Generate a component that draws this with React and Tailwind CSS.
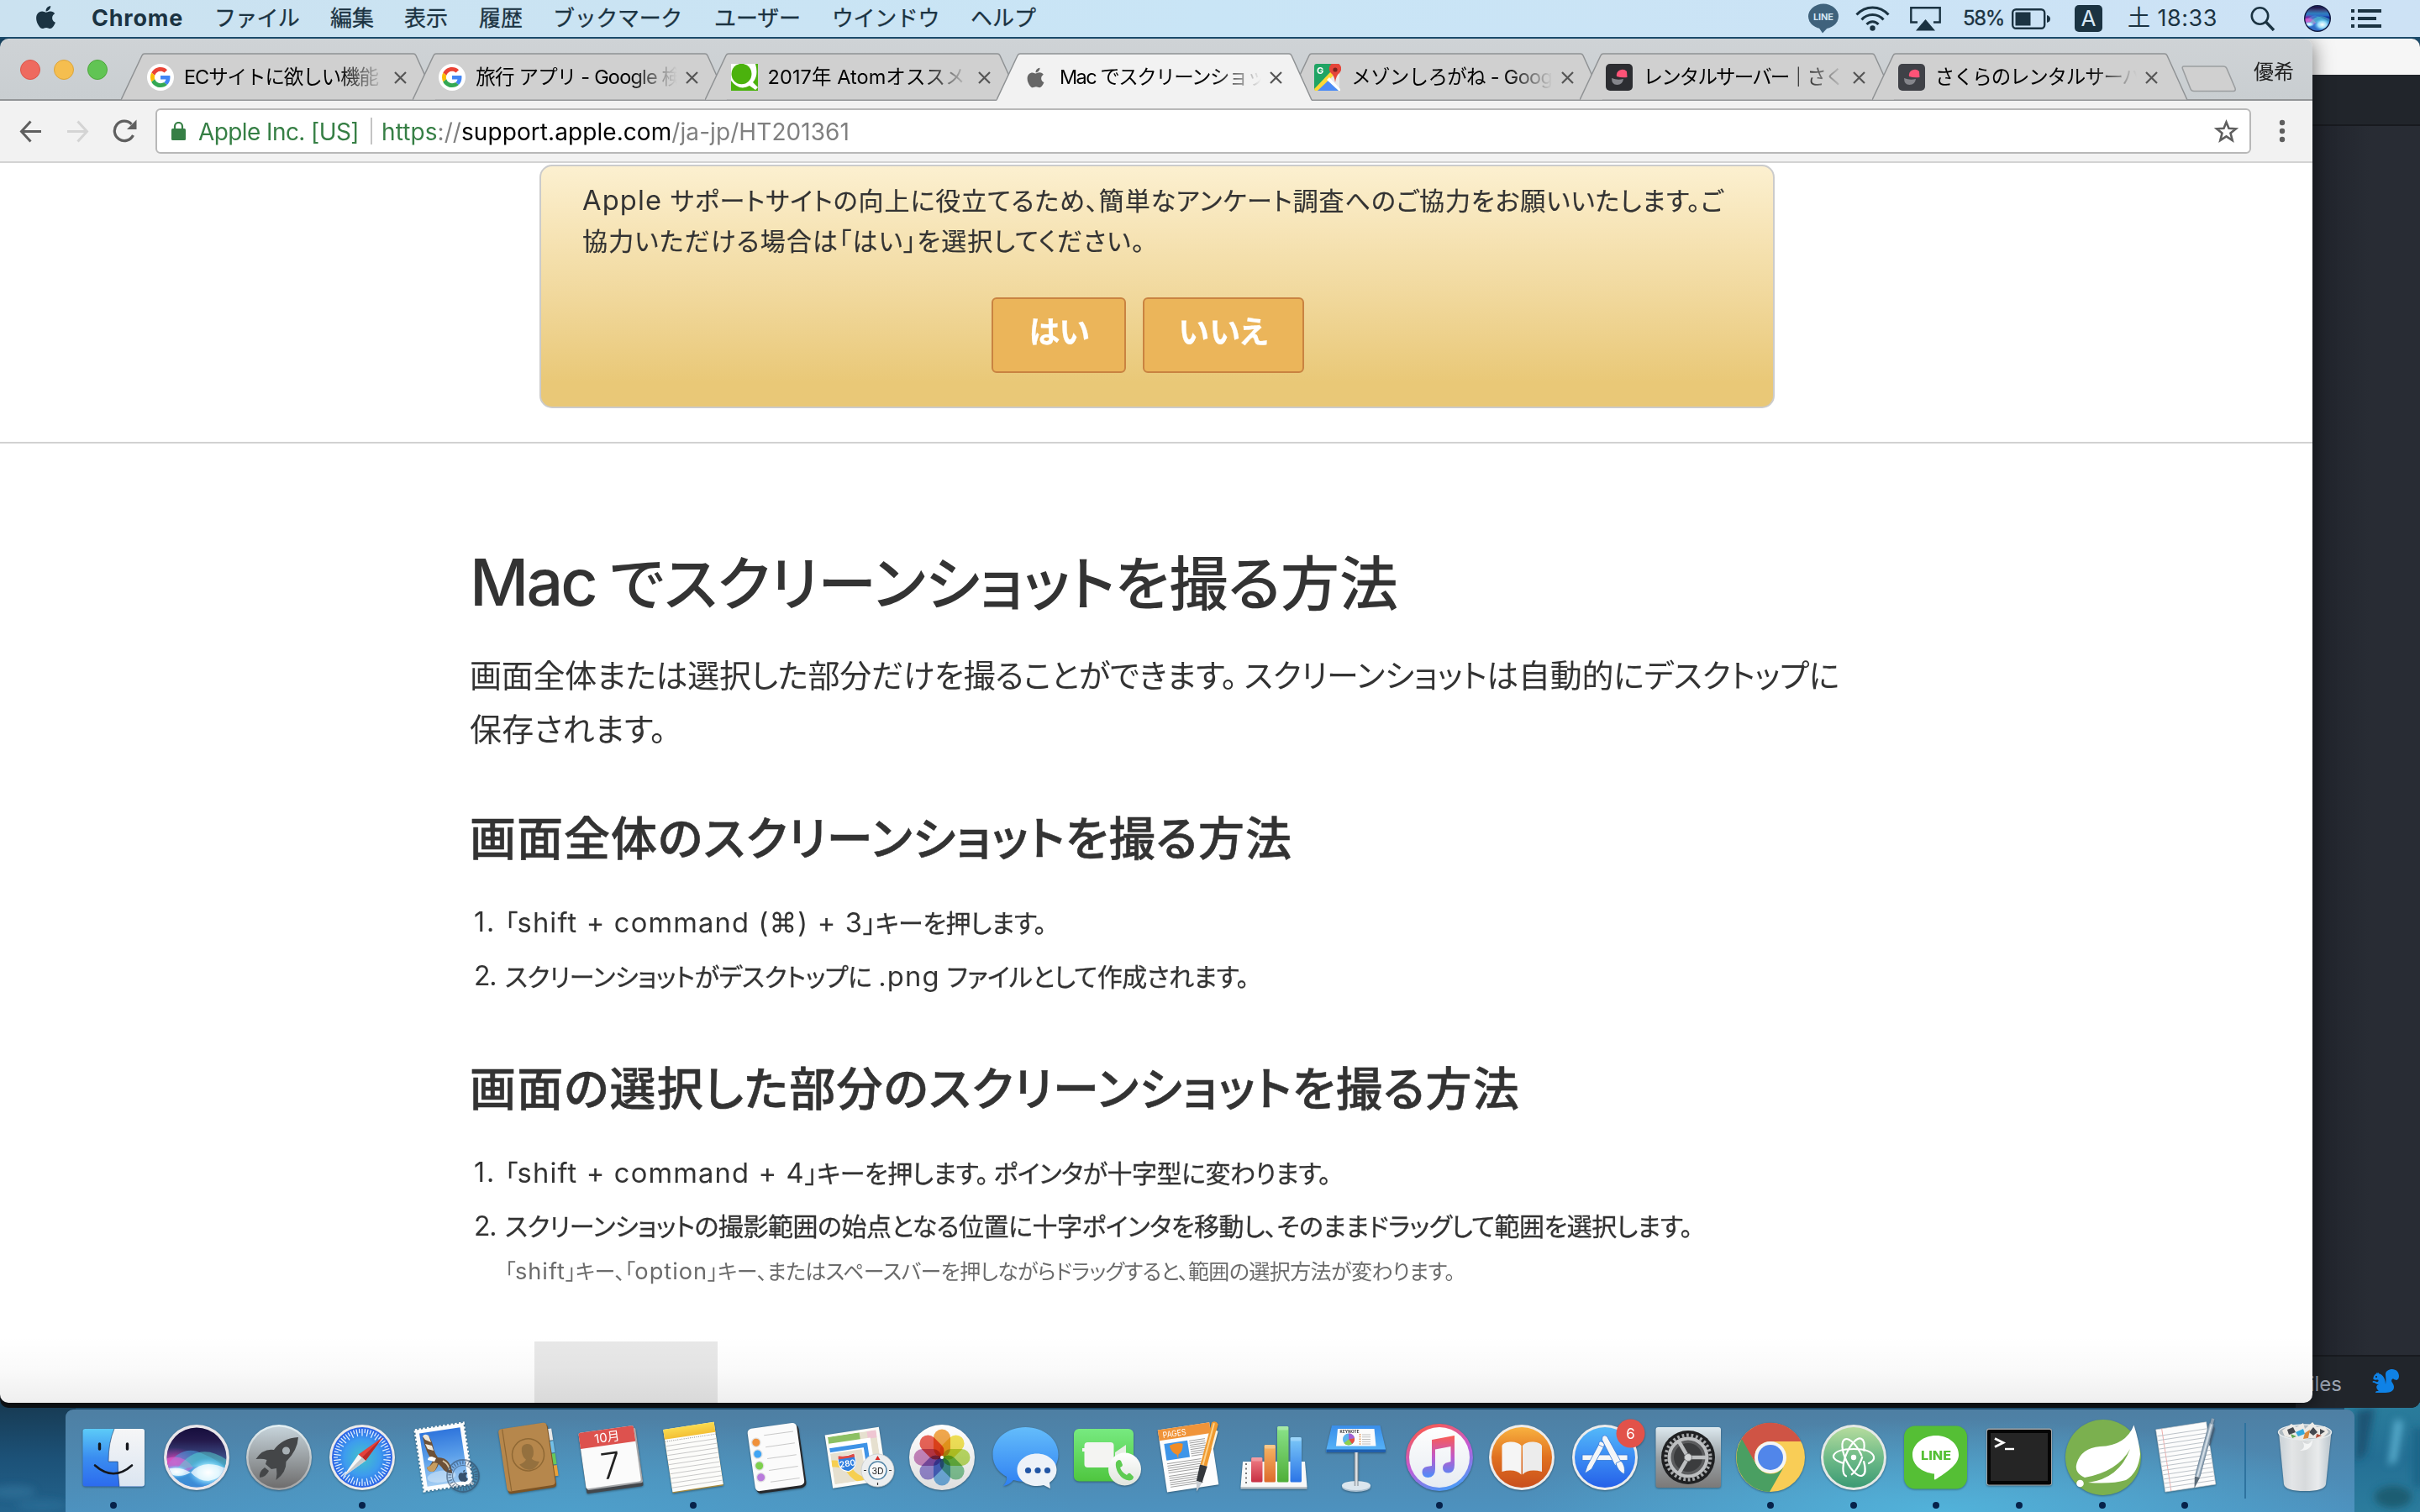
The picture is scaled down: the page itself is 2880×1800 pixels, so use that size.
import React, { useLayoutEffect, useRef } from 'react';
import { FaApple } from 'react-icons/fa';

/* Spaces the letters of one line of text so that it fills a given width. */
function Fit({ w, className = '', children }) {
  const ref = useRef(null);
  useLayoutEffect(() => {
    const el = ref.current;
    el.style.letterSpacing = '0px';
    const natural = el.getBoundingClientRect().width;
    const count = Math.max(1, el.textContent.length);
    el.style.letterSpacing = (w - natural) / count + 'px';
  }, [w]);
  return (
    <span ref={ref} className={'inline-block whitespace-pre ' + className}>
      {children}
    </span>
  );
}

/* Latin words inside Japanese text run slightly larger than the kana. */
function Latin({ children }) {
  return <span className="text-[1.09em] tracking-[0.035em] [-webkit-text-stroke:0px]">{children}</span>;
}

/* Extra room after a full stop in proportional Japanese setting. */
function Stop() {
  return <span className="mr-[0.22em]">。</span>;
}

/* ---------- menu bar ---------- */

const MENUS = [
  { t: 'ファイル', w: 101, box: 'w-[138px]' },
  { t: '編集', w: 52, box: 'w-[88px]' },
  { t: '表示', w: 52, box: 'w-[89px]' },
  { t: '履歴', w: 52, box: 'w-[88px]' },
  { t: 'ブックマーク', w: 154, box: 'w-[192px]' },
  { t: 'ユーザー', w: 103, box: 'w-[140px]' },
  { t: 'ウインドウ', w: 128, box: 'w-[165px]' },
  { t: 'ヘルプ', w: 78, box: 'w-[80px]' },
];

function MenuBar() {
  return (
    <div className="h-[44px] shrink-0 flex items-center bg-gradient-to-r from-[#cbe2f0] via-[#c9e5f6] to-[#cde2f5] text-[#1b3342] text-[26px] leading-[44px] relative z-10">
      <FaApple className="ml-[39px] mb-[4px] w-[31px] h-[31px]" />
      <div className="ml-[39px] w-[146px] font-bold"><Fit w={109} className="text-[27px]">Chrome</Fit></div>
      {MENUS.map((m) => (
        <div key={m.t} className={m.box + ' [-webkit-text-stroke:0.3px]'}><Fit w={m.w}>{m.t}</Fit></div>
      ))}
      <div className="flex-1" />
      <svg className="w-[36px] h-[36px]" viewBox="0 0 36 36">
        <ellipse cx="18" cy="15.5" rx="18" ry="15" fill="#3f627c" />
        <path d="M12 28 L17 35.5 L24 28 Z" fill="#3f627c" />
        <text x="18" y="20" fontSize="11" fontWeight="700" fill="#d3e6f4" textAnchor="middle" fontFamily="Inter" textLength="24">LINE</text>
      </svg>
      <svg className="ml-[20px] w-[41px] h-[30px]" viewBox="0 0 41 30" fill="none" stroke="#1b3342" strokeWidth="3">
        <path d="M1.5 10.5 C12 -1 29 -1 39.5 10.5" />
        <path d="M7.5 16.5 C14.5 8.5 26.5 8.5 33.5 16.5" />
        <path d="M13.5 22 C17.5 17.5 23.5 17.5 27.5 22" />
        <circle cx="20.5" cy="26.5" r="3.2" fill="#1b3342" stroke="none" />
      </svg>
      <svg className="ml-[24px] w-[37px] h-[29px]" viewBox="0 0 37 29">
        <path d="M9 18.5 H1.3 V1.2 H35.7 V18.5 H28" fill="none" stroke="#1b3342" strokeWidth="2.4" />
        <path d="M18.5 15 L30 28.5 H7 Z" fill="#1b3342" />
      </svg>
      <div className="ml-[26px] w-[58px] text-[24px] [-webkit-text-stroke:0.3px]"><Fit w={49}>58%</Fit></div>
      <svg className="w-[46px] h-[25px]" viewBox="0 0 46 25">
        <rect x="1.2" y="1.2" width="38" height="22.6" rx="4" fill="none" stroke="#1b3342" strokeWidth="2.4" />
        <rect x="4.5" y="4.5" width="18" height="16" fill="#1b3342" />
        <path d="M42 8 Q46 9 46 12.5 Q46 16 42 17 Z" fill="#1b3342" />
      </svg>
      <div className="ml-[29px] w-[33px] h-[32px] rounded-[5px] bg-[#1b3342] text-[#d6e7f5] text-[26px] leading-[32px] text-center">A</div>
      <div className="ml-[30px] w-[146px] text-[27px]"><Fit w={107}>土 18:33</Fit></div>
      <svg className="w-[30px] h-[30px]" viewBox="0 0 30 30" fill="none" stroke="#1b3342" strokeWidth="2.6">
        <circle cx="11.5" cy="12" r="9.7" />
        <path d="M18.5 19 L28 29" strokeWidth="3.4" />
      </svg>
      <div className="ml-[34px] w-[32px] h-[32px]"><SiriOrb small /></div>
      <svg className="ml-[24px] mr-[46px] w-[36px] h-[22px]" viewBox="0 0 36 22" fill="#1b3342">
        <path d="M0 0h4v4H0zM8 0h28v4H8zM0 9h4v4H0zM8 9h22v4H8zM0 18h4v4H0zM8 18h28v4H8z" />
      </svg>
    </div>
  );
}

/* ---------- browser window ---------- */

function GoogleMark() {
  return (
    <svg className="w-[32px] h-[32px]" viewBox="0 0 32 32">
      <circle cx="16" cy="16" r="16" fill="#fff" />
      <svg x="4" y="4" width="24" height="24" viewBox="0 0 48 48">
        <path fill="#EA4335" d="M24 9.5c3.54 0 6.71 1.22 9.21 3.6l6.85-6.85C35.9 2.38 30.47 0 24 0 14.62 0 6.51 5.38 2.56 13.22l7.98 6.19C12.43 13.72 17.74 9.5 24 9.5z" />
        <path fill="#4285F4" d="M46.98 24.55c0-1.57-.15-3.09-.38-4.55H24v9.02h12.94c-.58 2.96-2.26 5.48-4.78 7.18l7.73 6c4.51-4.18 7.09-10.36 7.09-17.65z" />
        <path fill="#FBBC05" d="M10.53 28.59c-.48-1.45-.76-2.99-.76-4.59s.27-3.14.76-4.59l-7.98-6.19C.92 16.46 0 20.12 0 24c0 3.88.92 7.54 2.56 10.78l7.97-6.19z" />
        <path fill="#34A853" d="M24 48c6.48 0 11.93-2.13 15.89-5.81l-7.73-6c-2.15 1.45-4.92 2.3-8.16 2.3-6.26 0-11.57-4.22-13.47-9.91l-7.98 6.19C6.51 42.62 14.62 48 24 48z" />
      </svg>
    </svg>
  );
}

function QiitaMark() {
  return (
    <svg className="w-[32px] h-[32px]" viewBox="0 0 32 32">
      <rect width="32" height="32" fill="#4bb20d" />
      <path d="M0 12 L0 0 H29 Q33 14 26 22 L32 28 L29 31 L22 26 Q10 33 0 20 Z" fill="#fff" />
      <ellipse cx="12.5" cy="12" rx="12" ry="12.2" fill="#4bb20d" />
    </svg>
  );
}

function MapsMark() {
  return (
    <svg className="w-[32px] h-[32px]" viewBox="0 0 32 32">
      <rect width="30" height="32" rx="3" fill="#20a464" />
      <path d="M30 8 V32 L15 17 Z" fill="#e9e9e9" />
      <path d="M2 32 L16 18 L29 32 Z" fill="#4c8bf5" />
      <path d="M0 30 L20 9 L24 13 L4 32 H1Z" fill="#fdd835" />
      <path d="M15 19 L18 16 L31 30 V32 H29Z" fill="#fff" />
      <text x="3" y="12" fontSize="11" fontWeight="700" fill="#fff" fontFamily="Inter">G</text>
      <path d="M25 22 Q24 14 20 11 A7.2 7.2 0 1 1 30 11 Q26 14 25 22Z" fill="#e5453a" />
      <circle cx="25" cy="7" r="2.6" fill="#7b231e" />
    </svg>
  );
}

function SakuraMark({ dark }) {
  return (
    <svg className="w-[32px] h-[32px]" viewBox="0 0 32 32">
      <rect width="32" height="32" rx="5" fill={dark ? '#2c2d31' : '#3f4147'} />
      <path d="M13 15 A7 7 0 0 1 25 9 L25.5 16 Q19 17 13 15Z" fill="#ff5377" />
      <path d="M7 17 Q14 20 21 18 Q20 25 13.5 25 Q7 25 7 17Z" fill="#85868c" />
    </svg>
  );
}

const TABS = [
  { icon: <GoogleMark />, text: 'ECサイトに欲しい機能', w: 231 },
  { icon: <GoogleMark />, text: '旅行 アプリ - Google 検', w: 244 },
  { icon: <QiitaMark />, text: '2017年 Atomオススメ', w: 235 },
  { icon: <FaApple className="w-[27px] h-[27px] mx-[2px] text-[#666]" />, text: 'Mac でスクリーンショッ', w: 245, active: true },
  { icon: <MapsMark />, text: 'メゾンしろがね - Goog', w: 239 },
  { icon: <SakuraMark dark />, text: 'レンタルサーバー｜さく', w: 238 },
  { icon: <SakuraMark />, text: 'さくらのレンタルサーバ', w: 245 },
];

function Tab({ tab }) {
  return (
    <div className={'relative h-[56px] w-[347.3px] shrink-0 ' + (tab.active ? 'z-[2]' : '')}>
      <svg className="absolute left-[-26px] top-0 w-[376px] h-[57px]" viewBox="0 0 376 57">
        <path
          d={tab.active ? 'M0 57 L25 3 Q26 1 28 1 H348 Q350 1 351 3 L375 57 Z' : 'M0 55.5 L25 3 Q26 1 28 1 H348 Q350 1 351 3 L375 55.5 Z'}
          fill={tab.active ? '#f2f2f2' : '#d0d0d0'}
        />
        <path d="M0 56 L25 3 Q26 1 28 1 H348 Q350 1 351 3 L375 56" fill="none" stroke="#8f9294" strokeWidth="1.5" />
      </svg>
      <div className="relative flex h-full items-center pl-[5px] pt-[2px]">
        <div className="w-[44px] shrink-0">{tab.icon}</div>
        <div className="w-[247px] overflow-hidden text-[23.5px] leading-[34px] text-black [mask-image:linear-gradient(to_right,black_184px,transparent_240px)]">
          <Fit w={tab.w}>{tab.text}</Fit>
        </div>
        <svg className="ml-[3px] w-[15px] h-[15px]" viewBox="0 0 15 15" stroke="#555" strokeWidth="2.2">
          <path d="M1 1 L14 14 M14 1 L1 14" />
        </svg>
      </div>
    </div>
  );
}

function TabStrip() {
  return (
    <div className="flex h-[74px] items-end border-b-2 border-[#939597] bg-gradient-to-b from-[#cfd3d6] to-[#c9ced1]">
      <div className="ml-[24px] mb-[23px] flex gap-[16px]">
        <i className="h-[24px] w-[24px] rounded-full border border-[#dc554a] bg-[#ee6a5f]" />
        <i className="h-[24px] w-[24px] rounded-full border border-[#dba43b] bg-[#f5be4f]" />
        <i className="h-[24px] w-[24px] rounded-full border border-[#4ea73d] bg-[#61c454]" />
      </div>
      <div className="ml-[42px] -mb-[1px] flex">
        {TABS.map((t) => <Tab key={t.text} tab={t} />)}
      </div>
      <svg className="mb-[8px] -ml-[5px] w-[66px] h-[32px]" viewBox="0 0 66 32">
        <path d="M3 1 H50 Q53 1 54 3.5 L64 27 Q65 30.5 62 30.5 H15 Q12 30.5 11 28 L1.5 4 Q0.5 1 3 1 Z" fill="#d0d0d0" stroke="#9b9ea0" strokeWidth="1.6" />
      </svg>
      <div className="ml-[20px] mb-[14px] text-[24px] leading-[36px] text-[#222]"><Fit w={48}>優希</Fit></div>
    </div>
  );
}

function Toolbar() {
  return (
    <div className="flex h-[74px] items-center border-b-2 border-[#d3d3d3] bg-[#f2f2f2]">
      <svg className="ml-[23px] w-[27px] h-[27px]" viewBox="0 0 27 27" fill="none" stroke="#5f5f5f" strokeWidth="3">
        <path d="M13.5 1.5 L2.5 13.5 L13.5 25.5 M2.5 13.5 H26" />
      </svg>
      <svg className="ml-[29px] w-[27px] h-[27px]" viewBox="0 0 27 27" fill="none" stroke="#d4d4d4" strokeWidth="3">
        <path d="M13.5 1.5 L24.5 13.5 L13.5 25.5 M24.5 13.5 H1" />
      </svg>
      <svg className="ml-[28px] w-[29px] h-[28px]" viewBox="0 0 29 28">
        <path d="M24.5 19 A11.7 11.7 0 1 1 22.5 5.8" fill="none" stroke="#5f5f5f" strokeWidth="3.2" />
        <path d="M28.5 0.5 V12 H17 Z" fill="#5f5f5f" />
      </svg>
      <div className="ml-[22px] flex h-[54px] w-[2494px] items-center rounded-[6px] border-2 border-[#b8b8b8] bg-white text-[28px] leading-[52px]">
        <svg className="ml-[17px] w-[17px] h-[22px]" viewBox="0 0 17 22">
          <rect y="8" width="17" height="14" rx="1.5" fill="#367f45" />
          <path d="M4 9 V5.5 A4.5 4.5 0 0 1 13 5.5 V9" fill="none" stroke="#367f45" strokeWidth="2.2" />
        </svg>
        <div className="ml-[15px] mt-[2px] w-[205px] text-[#367f45]"><Fit w={191}>Apple Inc. [US]</Fit></div>
        <div className="h-[32px] w-[2px] bg-[#c4c4c4]" />
        <Fit w={557} className="ml-[11px] mt-[2px] text-[#808080]"><span className="text-[#367f45]">https</span>://<span className="text-black">support.apple.com</span>/ja-jp/HT201361</Fit>
        <div className="flex-1" />
        <svg className="mr-[13px] w-[29px] h-[28px]" viewBox="0 0 29 28" fill="none" stroke="#5f5f5f" strokeWidth="2.6">
          <path d="M14.5 3.5 L17.5 10.8 L26 11.3 L19.5 16.6 L21.7 25 L14.5 20.4 L7.3 25 L9.5 16.6 L3 11.3 L11.5 10.8 Z" />
        </svg>
      </div>
      <svg className="ml-[33px] w-[8px] h-[28px]" viewBox="0 0 8 28" fill="#5f5f5f">
        <circle cx="4" cy="4" r="3.2" /><circle cx="4" cy="14" r="3.2" /><circle cx="4" cy="24" r="3.2" />
      </svg>
    </div>
  );
}

function Step({ n, w, children }) {
  return (
    <div className="flex h-[64px] items-center text-[30px] leading-[64px] [-webkit-text-stroke:0.3px]">
      <div className="w-[31px] text-right [-webkit-text-stroke:0px]"><Fit w={26} className="text-[32px]">{n + '.'}</Fit></div>
      <div className="ml-[11px]"><Fit w={w}>{children}</Fit></div>
    </div>
  );
}

function Page() {
  return (
    <div className="relative flex-1 overflow-hidden bg-white text-[#333] [font-feature-settings:'palt']">
      <div className="ml-[642px] mt-[2px] flex h-[290px] w-[1470px] flex-col rounded-[15px] border-2 border-[#cbcbcb] bg-gradient-to-b from-[#fcf0d0] to-[#e9c877] to-90% pl-[49px] pt-[17px] text-[30px] leading-[47.5px] [-webkit-text-stroke:0.2px]">
        <div><Fit w={1363}><Latin>Apple</Latin> サポートサイトの向上に役立てるため、簡単なアンケート調査へのご協力をお願いいたします。ご</Fit></div>
        <div><Fit w={670}>協力いただける場合は「はい」を選択してください。</Fit></div>
        <div className="ml-[487px] mt-[43px] flex gap-[20px] text-[37px] font-bold leading-[80px] text-white">
          <div className="h-[90px] w-[160px] rounded-[6px] border-2 border-[#c98341] bg-[#ebb55a] pl-[1px] text-center"><Fit w={72}>はい</Fit></div>
          <div className="h-[90px] w-[192px] rounded-[6px] border-2 border-[#c98341] bg-[#ebb55a] text-center"><Fit w={107}>いいえ</Fit></div>
        </div>
      </div>
      <div className="mt-[40px] h-[2px] bg-[#d2d2d2]" />
      <div className="ml-[559px]">
        <h1 className="mt-[115px] h-[100px] text-[70px] font-medium leading-[100px]">
          <Fit w={150} className="text-[77px]">Mac</Fit>
          <Fit w={938} className="ml-[17px]">でスクリーンショットを撮る方法</Fit>
        </h1>
        <div className="mt-[29px] text-[38px] leading-[64px]">
          <div><Fit w={1630}>画面全体または選択した部分だけを撮ることができます<Stop />スクリーンショットは自動的にデスクトップに</Fit></div>
          <div><Fit w={234}>保存されます。</Fit></div>
        </div>
        <h2 className="mt-[58px] text-[55px] font-medium leading-[80px] [-webkit-text-stroke:0.6px]"><Fit w={979}>画面全体のスクリーンショットを撮る方法</Fit></h2>
        <div className="mt-[28px]">
          <Step n="1" w={632}>「<Latin>shift + command (⌘) + 3</Latin>」キーを押します。</Step>
          <Step n="2" w={883}>スクリーンショットがデスクトップに <Latin>.png</Latin> ファイルとして作成されます。</Step>
        </div>
        <h2 className="mt-[62px] text-[55px] font-medium leading-[80px] [-webkit-text-stroke:0.6px]"><Fit w={1250}>画面の選択した部分のスクリーンショットを撮る方法</Fit></h2>
        <div className="mt-[28px]">
          <Step n="1" w={973}>「<Latin>shift + command + 4</Latin>」キーを押します<Stop />ポインタが十字型に変わります。</Step>
          <Step n="2" w={1413}>スクリーンショットの撮影範囲の始点となる位置に十字ポインタを移動し、そのままドラッグして範囲を選択します。</Step>
        </div>
        <div className="ml-[42px] text-[25px] leading-[44px] text-[#6b6b6b]"><Fit w={1124}>「<Latin>shift</Latin>」キー、「<Latin>option</Latin>」キー、またはスペースバーを押しながらドラッグすると、範囲の選択方法が変わります。</Fit></div>
        <div className="ml-[77px] mt-[61px] h-[90px] w-[218px] bg-[#e8e8e8]" />
      </div>
      <div className="absolute inset-x-0 bottom-0 h-[80px] bg-gradient-to-b from-black/0 via-black/[0.02] to-black/[0.065]" />
    </div>
  );
}

function Browser() {
  return (
    <div className="relative z-[1] flex h-[1624px] w-[2752px] shrink-0 flex-col overflow-hidden rounded-[10px] shadow-[0_4px_24px_rgba(0,0,0,0.55)]">
      <TabStrip />
      <Toolbar />
      <Page />
    </div>
  );
}

function EditorWindow() {
  return (
    <div className="-ml-[20px] flex h-[1630px] flex-1 flex-col overflow-hidden rounded-r-[10px] bg-[#282c34]">
      <div className="h-[43px] bg-[#f6f6f6]" />
      <div className="h-[59px] bg-[#21252b]" />
      <div className="h-[2px] bg-[#181a1f]" />
      <div className="flex-1 bg-gradient-to-r from-[#1e2129] to-[#282c34] to-60%" />
      <div className="h-[2px] bg-[#181a1f]" />
      <div className="flex h-[61px] items-center justify-end bg-[#21252b] pr-[25px] text-[#9da5b4]">
        <span className="mt-[5px] mr-[36px] text-[24px]">files</span>
        <svg className="mb-[3px] h-[32px] w-[32px]" viewBox="0 0 16 16" fill="#0f82e6">
          <path fillRule="evenodd" d="M12 1C9.79 1 8 2.31 8 3.92c0 1.94.5 3.03 0 6.08 0-4.5-2.77-6.34-4-6.34.05-.5-.48-.66-.48-.66s-.22.11-.3.34c-.27-.31-.56-.27-.56-.27l-.13.58S.7 4.29.68 6.87c.2.33 1.53.6 2.47.43.89.05.67.79.47.99C2.78 9.13 2 8 1 8S0 9 1 9s1 1 3 1c-3.09 1.2 0 4 0 4H3c-1 0-1 1-1 1h6c3 0 5-1 5-3.47 0-.85-.43-1.79-1-2.53-1.11-1.46.23-2.68 1-2 .77.68 3 1 3-2 0-2.21-1.79-4-4-4zM2.5 6c-.28 0-.5-.22-.5-.5s.22-.5.5-.5.5.22.5.5-.22.5-.5.5z" />
        </svg>
      </div>
    </div>
  );
}

/* ---------- dock icons, each on a 96 x 96 canvas ---------- */

function Svg({ children }) {
  return <svg className="h-full w-full overflow-visible" viewBox="0 0 96 96">{children}</svg>;
}

function Grad({ id, stops, h }) {
  return (
    <linearGradient id={id} x1="0" y1="0" x2={h ? 1 : 0} y2={h ? 0 : 1}>
      {stops.map((c, i) => <stop key={i} offset={i / (stops.length - 1)} stopColor={c} />)}
    </linearGradient>
  );
}

function SiriOrb({ small }) {
  const id = small ? 'siriS' : 'siriL';
  return (
    <svg className="h-full w-full" viewBox={small ? '9 9 78 78' : '0 0 96 96'}>
      <defs>
        <Grad id={id} stops={['#120a38', '#241a4c', '#3b4c86', '#2f7fc0', '#2a63c4']} />
        <clipPath id={id + 'c'}><circle cx="48" cy="48" r="35.5" /></clipPath>
        <radialGradient id={id + 'g'}><stop offset="0" stopColor="#fff" /><stop offset="0.5" stopColor="#a8ecff" stopOpacity="0.9" /><stop offset="1" stopColor="#4db4ff" stopOpacity="0" /></radialGradient>
        <radialGradient id={id + 'p'}><stop offset="0" stopColor="#ff3fae" /><stop offset="1" stopColor="#c22bb0" stopOpacity="0" /></radialGradient>
      </defs>
      <circle cx="48" cy="48" r="39" fill={small ? '#10183c' : '#e9e6ea'} />
      <g clipPath={`url(#${id}c)`}>
        <rect x="8" y="8" width="80" height="80" fill={small ? '#1430a0' : `url(#${id})`} />
        {small ? <rect x="8" y="8" width="80" height="34" fill={`url(#${id})`} /> : null}
        <ellipse cx="22" cy="54" rx="26" ry="18" fill={`url(#${id}p)`} />
        <path d="M10 62 Q30 30 56 44 Q76 52 88 66 V86 H10Z" fill="#4aa3e6" opacity="0.55" />
        <path d="M10 50 Q30 42 44 60 Q34 70 10 66Z" fill="#e45fd0" opacity="0.6" />
        <path d="M26 60 Q52 26 88 54 V62 Q60 52 26 64Z" fill="#58d9d2" opacity="0.5" />
        <ellipse cx="62" cy="66" rx="25" ry="18" fill={`url(#${id}g)`} />
        <ellipse cx="24" cy="65" rx="16" ry="8" fill={`url(#${id}g)`} />
        {small ? null : (
          <path d="M12 62 Q28 58 41 66 Q50 56 62 56 Q74 56 84 62 Q76 74 62 76 Q50 76 41 66 Q26 74 14 66Z" fill="#fff" opacity="0.7" />
        )}
      </g>
    </svg>
  );
}

function Finder() {
  return (
    <Svg>
      <defs><Grad id="fdL" stops={['#5ccbf8', '#3a8df0', '#2c6bee']} /><Grad id="fdR" stops={['#f6f6f7', '#dbe5f1']} /></defs>
      <rect x="11.5" y="14" width="73.5" height="68.5" rx="3" fill="url(#fdL)" />
      <path d="M49 14 H82 Q85 14 85 17 V79.5 Q85 82.5 82 82.5 H55 Q53.5 68 53.5 53 H42 Q42 30 49 14Z" fill="url(#fdR)" />
      <path d="M49 14 Q42 30 42 53 H53 Q53 68 55 82.5" fill="none" stroke="#1e3b66" strokeWidth="1" opacity="0.6" />
      <path d="M31.5 32 V38 M64.5 32 V38" stroke="#15171c" strokeWidth="3.4" strokeLinecap="round" />
      <path d="M26 57.5 Q48 77 70 57.5" fill="none" stroke="#15171c" strokeWidth="2.6" strokeLinecap="round" />
    </Svg>
  );
}

function Launchpad() {
  return (
    <Svg>
      <defs><Grad id="lpA" stops={['#e4f1f5', '#a2a2a3']} /><Grad id="lpB" stops={['#c6d3da', '#6e6d6d']} /></defs>
      <circle cx="48" cy="48" r="39" fill="url(#lpA)" /><circle cx="48" cy="48" r="36.5" fill="url(#lpB)" />
      <path d="M71 24 Q52 25 42 39 Q29 37 20.5 50 Q29 49 33.5 51 L32 56 L39 62 L45 61 Q46 67 44.5 75 Q57 66 56.5 53 Q70 40 71 24Z" fill="#444648" />
      <path d="M31 60 Q24 65 25 72 Q33 71 36 64Z" fill="#444648" />
      <circle cx="56.5" cy="40" r="4.6" fill="#a9b1b5" />
    </Svg>
  );
}

function Safari() {
  const ticks = Array.from({ length: 60 }, (_, i) => i);
  return (
    <Svg>
      <defs><radialGradient id="sfA"><stop offset="0" stopColor="#43c2c9" /><stop offset="0.6" stopColor="#3d9bef" /><stop offset="1" stopColor="#2b62e6" /></radialGradient></defs>
      <circle cx="48" cy="48" r="39" fill="#eceaea" /><circle cx="48" cy="48" r="36" fill="url(#sfA)" />
      {ticks.map((i) => (
        <path key={i} d={i % 2 ? 'M48 14 V19' : 'M48 14 V22.5'} stroke="#e6f3ff" strokeWidth="1.2" transform={`rotate(${i * 6} 48 48)`} />
      ))}
      <path d="M72.5 24 L43.5 44.5 L52 52Z" fill="#e5413b" />
      <path d="M72.5 24 L48 48 L52 52Z" fill="#b92c29" />
      <path d="M25 71.5 L43.5 44.5 L52 52Z" fill="#f6f6f6" />
      <path d="M25 71.5 L48 48 L52 52Z" fill="#c7c9cb" />
    </Svg>
  );
}

function Mail() {
  return (
    <Svg>
      <defs><Grad id="mlA" stops={['#2f75dc', '#5b9fe9', '#a3cdf3']} /></defs>
      <g transform="rotate(-8.6 46 47)">
        <rect x="17" y="11" width="58" height="73" fill="#fdfdfd" stroke="#fdfdfd" strokeWidth="3" strokeDasharray="2.4 2.4" />
        <rect x="21.5" y="15.5" width="49" height="64" fill="url(#mlA)" />
        <ellipse cx="40" cy="70" rx="17" ry="7" fill="#dcebf9" opacity="0.5" />
      </g>
      <path d="M21 23 Q24 20 28 22 Q33 30 34 38 Q36 44 39 48 Q48 48 52 54 Q56 60 56 67 Q48 67 43 59 L40 56 Q36 66 32 65 Q27 65 26 60 Q30 59 33 52 Q25 44 21 23Z" fill="#6d5138" />
      <path d="M21 23 Q23 19 28 22 L31 30 L24 27Z M24 32 L32 34 L34 40 L27 38Z" fill="#eee6d8" />
      <path d="M39 55 Q36 66 32 65 Q27 65 26 60 Q31 58 34 54Z" fill="#c79d60" />
      <path d="M32 47 Q27 47 27 51 L35 53 L37 49Z" fill="#fff" />
      <path d="M45 52 Q52 56 53 63" fill="none" stroke="#d9c7a6" strokeWidth="2" />
      <g fill="none" stroke="#37506c" opacity="0.6"><circle cx="69" cy="70" r="19" strokeWidth="1.8" /><circle cx="69" cy="70" r="12.5" strokeWidth="1.2" /><circle cx="69" cy="70" r="15.7" strokeWidth="4" strokeDasharray="1.5 1.8" /></g>
      <svg x="62" y="62.5" width="14" height="15" viewBox="0 0 24 28" fill="#37506c"><path d="M12 8 C16 5 20 6 22 9 C17 12 18 18 23 20 C21 25 18 29 12 26 C6 29 1 20 2 14 C3 7 8 6 12 8 Z M12 6 Q12 1 17 0 Q17 5 12 6Z" /></svg>
    </Svg>
  );
}

function Contacts() {
  return (
    <Svg>
      <g transform="rotate(-8.6 48 48)">
        <path d="M74 18h7v14h-7z" fill="#e6e6e6" /><path d="M74 33h7v14h-7z" fill="#72bfe8" /><path d="M74 48h7v13h-7z" fill="#66c85c" /><path d="M74 62h7v13h-7z" fill="#e8a13a" />
        <rect x="19" y="12" width="58" height="76" rx="4" fill="#7c5425" />
        <rect x="18" y="10" width="58" height="75" rx="4" fill="#b6874c" />
        <path d="M23 10.5 V84.5" stroke="#8f6733" strokeWidth="1.2" />
        <circle cx="49" cy="45" r="19" fill="none" stroke="#8f6834" strokeWidth="1.5" />
        <path d="M49 32 Q56 32 56 40 Q56 47 52.5 50 Q53 53 61 55 Q56 63 49 63 Q42 63 37 55 Q45 53 45.5 50 Q42 47 42 40 Q42 32 49 32Z" fill="#94703e" />
      </g>
    </Svg>
  );
}

function Calendar() {
  return (
    <Svg>
      <g transform="rotate(-8 48 50)">
        <rect x="14" y="19" width="68" height="68" rx="2" fill="#43474c" />
        <rect x="15" y="17" width="67" height="66" rx="2" fill="#a6a8ab" />
        <rect x="14" y="14" width="66" height="67" rx="2" fill="#fbfbfb" />
        <path d="M14 16 Q14 14 16 14 H78 Q80 14 80 16 V33 H14Z" fill="#dd524e" />
        <text x="47" y="29" fontSize="15" fill="#fff" textAnchor="middle" fontFamily="Inter, 'Noto Sans CJK JP'">10月</text>
        <text x="47" y="73" fontSize="43" fontWeight="300" fill="#222" textAnchor="middle" fontFamily="Inter">7</text>
      </g>
    </Svg>
  );
}

function Lines({ from, to, n, x1, x2, color }) {
  return Array.from({ length: n }, (_, i) => {
    const y = from + ((to - from) * i) / (n - 1);
    return <path key={i} d={`M${x1} ${y} H${x2}`} stroke={color} strokeWidth="0.9" />;
  });
}

function Notes() {
  return (
    <Svg>
      <defs><Grad id="ntA" stops={['#fbdb4f', '#f3bf34']} /></defs>
      <g transform="rotate(-8.6 48 47.5)">
        <rect x="17.5" y="11" width="61" height="75.5" fill="#a58a3f" />
        <rect x="17.5" y="10" width="61" height="75" fill="#fcfcfa" />
        <rect x="17.5" y="10" width="61" height="12" fill="url(#ntA)" />
        <path d="M17.5 24.5 H78.5" stroke="#8b8b8b" strokeDasharray="1 1.5" />
        <Lines from={30} to={80} n={10} x1={18} x2={78} color="#c6c6c6" />
      </g>
    </Svg>
  );
}

function Reminders() {
  const dots = ['#f0913a', '#41a5f4', '#7ed04e', '#b97bdc'];
  return (
    <Svg>
      <g transform="rotate(-8 48 48)">
        <rect x="19" y="12" width="60" height="76" rx="6" fill="#26282b" />
        <rect x="18" y="10" width="59" height="75" rx="5" fill="#fbfbfb" />
        <path d="M37 20 H72" stroke="#c9c9c9" />
        {dots.map((c, i) => (
          <g key={c}>
            <circle cx="26.5" cy={27 + i * 14} r="5.8" fill="#e0e0e0" />
            <circle cx="26.5" cy={27 + i * 14} r="4.5" fill={c} />
            <path d={`M37 ${34 + i * 14} H72`} stroke="#c9c9c9" />
          </g>
        ))}
      </g>
    </Svg>
  );
}

function Maps() {
  return (
    <Svg>
      <defs><clipPath id="mpC"><rect x="14" y="19" width="58" height="57" /></clipPath></defs>
      <g transform="rotate(-8.6 45 48)">
        <rect x="11" y="16" width="65" height="64" fill="#fbfbf8" />
        <g clipPath="url(#mpC)">
          <rect x="14" y="19" width="58" height="57" fill="#e6e0cf" />
          <path d="M14 19h38v9H14z" fill="#8cc063" /><path d="M61 19h11v9H61z" fill="#efc6d2" />
          <path d="M14 33 H58 V76" fill="none" stroke="#fff" strokeWidth="12" />
          <path d="M14 35 H57 V76" fill="none" stroke="#3f93e6" strokeWidth="5" />
          <path d="M14 51 Q30 52 34 62 Q38 72 52 78" fill="none" stroke="#f6cf52" strokeWidth="8" />
        </g>
        <path d="M23 43 Q32 46 42 43 Q46 60 32.5 63 Q19 60 23 43Z" fill="#2f7fe0" stroke="#fff" />
        <path d="M23 43 Q32 46 42 43 L42.5 47 H22.5Z" fill="#dc4b45" />
        <text x="32.5" y="57" fontSize="10" fontWeight="600" fill="#fff" textAnchor="middle" fontFamily="Inter">280</text>
      </g>
      <circle cx="69.5" cy="63.5" r="19.5" fill="#eceeef" stroke="#c6cacc" strokeWidth="0.8" />
      <circle cx="69.5" cy="63.5" r="10.5" fill="#f6f8f9" stroke="#5486a8" strokeWidth="1.5" />
      <text x="69.5" y="67.5" fontSize="10.5" fill="#222" textAnchor="middle" fontFamily="Inter">3D</text>
      <path d="M69.5 46 L72.5 51 H66.5Z" fill="#dc2b27" />
      <path d="M69.5 78 V81 M53 63.5 H56 M83 63.5 H86" stroke="#333" strokeWidth="1.2" />
    </Svg>
  );
}

function Photos() {
  const c = ['#f39a2e', '#f2e03a', '#b3d84a', '#6fc187', '#5ca6e2', '#8a79cf', '#c274b8', '#ea4a3c'];
  return (
    <Svg>
      <defs><Grad id="phA" stops={['#fefefe', '#dedede']} /></defs>
      <circle cx="48" cy="48" r="39" fill="url(#phA)" />
      {c.map((f, i) => (
        <rect key={f} x="38" y="14.5" width="20" height="33" rx="10" fill={f} opacity="0.85" className="mix-blend-multiply" transform={`rotate(${i * 45} 48 48)`} />
      ))}
      <circle cx="48" cy="48" r="2" fill="#fff" />
    </Svg>
  );
}

function Messages() {
  return (
    <Svg>
      <defs><Grad id="msA" stops={['#64bdfb', '#2f80f2']} /></defs>
      <path d="M48.5 12 C70 12 87.5 26 87.5 44.5 C87.5 63 70 77 48.5 77 Q40 77 34 75 Q29 81 22 82 Q27 76 26 71 Q9.5 62 9.5 44.5 C9.5 26 27 12 48.5 12Z" fill="url(#msA)" />
      <path d="M62 43.5 C75 43.5 85.5 52 85.5 63 Q85.5 72 77 78 L78 85 L70 81 Q66 82 62 82 C49 82 38.5 74 38.5 63 C38.5 52 49 43.5 62 43.5Z" fill="#edf2f8" />
      <circle cx="51.5" cy="63.5" r="3.6" fill="#2256a5" /><circle cx="63" cy="63.5" r="3.6" fill="#2256a5" /><circle cx="74.5" cy="63.5" r="3.6" fill="#2256a5" />
    </Svg>
  );
}

function FaceTime() {
  return (
    <Svg>
      <defs><Grad id="ftA" stops={['#77ea80', '#4fc63f']} /><Grad id="ftB" stops={['#fff', '#dfe4dd']} /></defs>
      <rect x="8" y="14" width="71" height="62.5" rx="6" fill="url(#ftA)" />
      <rect x="20.5" y="30" width="35" height="30" rx="4" fill="#f4f4f2" /><rect x="18" y="37" width="3" height="4" fill="#f4f4f2" />
      <path d="M57 42 L70 33 V56 L57 48Z" fill="#e7efe5" />
      <circle cx="68.5" cy="62" r="19.5" fill="url(#ftB)" />
      <path d="M58 54 Q61 49 64 52 L66 57 Q66 59 63 60 Q65 66 71 69 Q73 66 75 67 L79 71 Q79 75 74 75.5 Q66 75 61 67 Q57 60 58 54Z" fill="#5ecb52" />
    </Svg>
  );
}

function Pages() {
  return (
    <Svg>
      <g transform="rotate(-8.6 44 47.5)">
        <rect x="14" y="10.5" width="62" height="75" fill="#fdfdfd" />
        <rect x="14" y="10.5" width="62" height="13" fill="#f0943a" />
        <text x="19" y="21" fontSize="10" fill="#fff" fontFamily="Inter" textLength="28" lengthAdjust="spacingAndGlyphs">PAGES</text>
        <rect x="19" y="28" width="28" height="20" fill="#3e95e8" />
        <path d="M25 31 Q33 28 41 31 Q40 40 34 43 L33 48 L32 43 Q26 40 25 31Z" fill="#f08c24" />
        <Lines from={29} to={47} n={8} x1={49} x2={68} color="#9a9a9a" />
        <Lines from={52} to={63} n={5} x1={19} x2={60} color="#9a9a9a" />
        <Lines from={67} to={80} n={6} x1={19} x2={58} color="#9a9a9a" />
      </g>
      <g transform="rotate(15 66 48)">
        <path d="M62 6 Q66 2 70 6 V58 H62Z" fill="#f09a2f" /><path d="M64 6 h2 V58 h-2z" fill="#fbd28c" />
        <path d="M69.5 14 h2.5 V36 h-2.5z" fill="#fff3dc" />
        <path d="M61.5 58 H70.5 L69.5 78 H62.5Z" fill="#33373b" />
        <path d="M62.5 78 H69.5 L66 90Z" fill="#c9cdd2" />
      </g>
    </Svg>
  );
}

function Numbers() {
  const bars = [[21, 48, '#f07f86', '#c82f43'], [36.5, 33, '#f6b765', '#dd6a2b'], [52, 11, '#8be38b', '#4fae38'], [67.5, 24, '#7cc9f8', '#2b74e6']];
  return (
    <Svg>
      <defs>{bars.map((b, i) => <Grad key={i} id={'nb' + i} stops={[b[2], b[3]]} />)}</defs>
      <path d="M11 53 H85 L87.5 83 H8.5Z" fill="#f8f8f8" /><path d="M8.5 83 H87.5 V85.5 H8.5Z" fill="#bfc3c7" />
      <path d="M15 55 V80" stroke="#777" strokeWidth="2" strokeDasharray="2 3.5" />
      {bars.map((b, i) => (
        <g key={i}><rect x={b[0]} y={b[1]} width="13.5" height={77.5 - b[1]} rx="1.5" fill={`url(#nb${i})`} /><rect x={b[0] + 0.5} y={b[1]} width="12.5" height="4.5" rx="1" fill="#fff" opacity="0.25" /></g>
      ))}
    </Svg>
  );
}

function Keynote() {
  return (
    <Svg>
      <defs><Grad id="knA" stops={['#3a8eea', '#58b5f8']} /><Grad id="knB" h stops={['#77828c', '#f0f3f5', '#7c8790']} /></defs>
      <ellipse cx="48" cy="83" rx="17" ry="6" fill="#a9bfd0" /><ellipse cx="48" cy="81.5" rx="17" ry="5.5" fill="#dbe6ee" />
      <rect x="45.8" y="40" width="4.7" height="42" fill="url(#knB)" />
      <path d="M19 10 H76.5 L83 38 V42 H12.5 V38Z" fill="url(#knA)" /><path d="M12.5 38.5 H83 V42 H12.5Z" fill="#1f5fb0" />
      <path d="M26 14 H69.5 L71.5 34.5 H24Z" fill="#fbfbfb" />
      <text x="28.5" y="18.5" fontSize="4.6" fontWeight="700" fill="#333" fontFamily="Inter" textLength="23">KEYNOTE</text>
      <circle cx="39" cy="26.5" r="7" fill="#5db4ee" />
      <path d="M39 26.5 V19.5 A7 7 0 0 1 46 25Z" fill="#a55fd0" /><path d="M39 26.5 L46 25 A7 7 0 0 1 43 32Z" fill="#e5503d" /><path d="M39 26.5 L43 32 A7 7 0 0 1 33.5 31Z" fill="#8fd04c" />
      <Lines from={21} to={32} n={5} x1={55} x2={65} color="#b9b9b9" />
      <path d="M52.5 20 V33" stroke="#e08a3e" strokeWidth="1.5" strokeDasharray="1.5 1.3" />
    </Svg>
  );
}

function ITunes() {
  return (
    <Svg>
      <defs>
        <linearGradient id="itA" x1="0.3" y1="0" x2="0.7" y2="1"><stop offset="0" stopColor="#fb5a4d" /><stop offset="0.5" stopColor="#c25ad8" /><stop offset="1" stopColor="#3fa0fa" /></linearGradient>
        <Grad id="itB" stops={['#fefefe', '#e7ecf2']} />
        <Grad id="itC" stops={['#fb5c50', '#c159c9', '#4a8dfb']} />
      </defs>
      <circle cx="48" cy="48" r="40" fill="url(#itA)" /><circle cx="48" cy="48" r="36" fill="url(#itB)" />
      <path d="M39 27 L66 22 V57 Q66 66 59 66.5 Q52 66.5 52 60.5 Q52 55 58 54 L61.5 53 V35 L43 38.5 V62 Q43 71.5 34.5 72 Q27.5 71.5 27.5 65.5 Q27.5 60 33 59 L39 58Z" fill="url(#itC)" />
    </Svg>
  );
}

function IBooks() {
  return (
    <Svg>
      <defs><Grad id="ibA" stops={['#f8b13f', '#e0701f', '#c94f1d']} /></defs>
      <circle cx="48" cy="48" r="39" fill="#ececec" /><circle cx="48" cy="48" r="36" fill="url(#ibA)" />
      <path d="M47.5 34 Q43 29 34 29.5 Q26 30 24.5 34 V65 Q40 61 47.5 68.5Z" fill="#f5f5f5" />
      <path d="M49 34 Q53 29 62 29.5 Q70 30 72 34 V65 Q56 61 49 68.5Z" fill="#ececec" />
    </Svg>
  );
}

function AppStore() {
  return (
    <Svg>
      <defs><Grad id="asA" stops={['#54b9f9', '#3b8cf4', '#2560e8']} /></defs>
      <circle cx="48" cy="48" r="39" fill="#ececec" /><circle cx="48" cy="48" r="36" fill="url(#asA)" />
      <g fill="#f4f6f8" stroke="#3578d8" strokeWidth="0.8">
        <rect x="21" y="45" width="54" height="6.5" />
        <path d="M42 30 L47.5 34 L32 62 L24 67 L27 58Z" /><path d="M41 30 Q43 27 47.5 32 L46.5 36 L40.5 33Z" />
        <path d="M45 23 Q48 20.5 50.5 23 L67 53 L60 57.5 L44.5 27Z" /><path d="M61 55 L67 52 Q73 58 71 68 Q63 64 61 55Z" />
      </g>
      <circle cx="78.5" cy="19.5" r="17" fill="#e2524a" />
      <text x="78.5" y="25.5" fontSize="17" fill="#fff" textAnchor="middle" fontFamily="Inter">6</text>
    </Svg>
  );
}

function Settings() {
  return (
    <Svg>
      <defs><Grad id="stA" stops={['#dde9ef', '#9aa1a5', '#7b7978']} /></defs>
      <rect x="9.5" y="12" width="77.5" height="72" rx="3" fill="url(#stA)" />
      <circle cx="48" cy="48" r="32" fill="#1f2022" />
      <circle cx="48" cy="48" r="26.5" fill="none" stroke="#a7a9ab" strokeWidth="4" strokeDasharray="2.75 2.8" />
      <circle cx="48" cy="48" r="22.5" fill="#5b5c5e" stroke="#bdbfc1" strokeWidth="4" />
      <circle cx="48" cy="48" r="17" fill="#3b3c3e" />
      <path d="M48 48 H69 M48 48 L37.5 29.8 M48 48 L37.5 66.2" stroke="#bcbec0" strokeWidth="4.5" />
      <circle cx="48" cy="48" r="4.5" fill="#d3d5d6" stroke="#77797b" />
    </Svg>
  );
}

function Chrome() {
  return (
    <Svg>
      <circle cx="48" cy="48" r="41" fill="#f9cd56" />
      <path d="M12.5 27.5 A41 41 0 0 1 84.5 29 H48 A19 19 0 0 0 30 41 L30 54Z" fill="#cf5445" />
      <path d="M14 26 A41 41 0 0 0 47 89 L63.5 60 A19 19 0 0 1 31.5 57.5Z" fill="#4a9f62" />
      <circle cx="48" cy="48" r="19" fill="#f5f5f5" /><circle cx="48" cy="48" r="15" fill="#5186ea" />
    </Svg>
  );
}

function Atom() {
  return (
    <Svg>
      <defs><Grad id="atA" stops={['#b6dc9d', '#6fbb88', '#3b9a74']} /></defs>
      <circle cx="48" cy="48" r="39" fill="#e5e9e6" /><circle cx="48" cy="48" r="36" fill="url(#atA)" />
      <g fill="none" stroke="#fff" strokeWidth="2.2" strokeLinecap="round">
        <path d="M66 55 Q73 52 72 47 Q69 38 48 38 Q27 38 24 46 Q23 51 36 55" />
        <ellipse cx="48" cy="48" rx="24" ry="9.5" transform="rotate(64 48 48)" strokeDasharray="84 8" />
        <ellipse cx="48" cy="48" rx="24" ry="9.5" transform="rotate(112 48 48)" strokeDasharray="70 8 24" />
      </g>
      <circle cx="48" cy="48" r="3.2" fill="#fff" />
    </Svg>
  );
}

function Line() {
  return (
    <Svg>
      <rect x="10" y="10.5" width="75" height="75" rx="13" fill="#55bf35" />
      <path d="M48 22 C63 22 75 32 75 45 C75 57 60 66 47 74.5 Q45.5 75 46 71 L46 67.5 C31 66 20 57 20 45 C20 32 33 22 48 22Z" fill="#fff" />
      <text x="48" y="51" fontSize="15" fontWeight="800" fill="#55bf35" textAnchor="middle" fontFamily="Inter" textLength="36" lengthAdjust="spacingAndGlyphs">LINE</text>
    </Svg>
  );
}

function Terminal() {
  return (
    <Svg>
      <rect x="9" y="13.5" width="78" height="68" rx="3" fill="#a4a7a9" />
      <rect x="10" y="15" width="76" height="65.5" rx="2" fill="#050505" /><rect x="14" y="19" width="68" height="57" fill="#252525" />
      <path d="M19 25.5 L29 30.5 L19 35.5" fill="none" stroke="#fff" strokeWidth="2.8" /><path d="M31 38 H42" stroke="#fff" strokeWidth="2.4" />
    </Svg>
  );
}

function Spring() {
  return (
    <Svg>
      <circle cx="49" cy="48" r="45" fill="#7bb04f" />
      <path d="M85.5 9.5 Q92 30 93 44 Q91 66 76 75 Q60 80 31 78 Q68 73 81 38 Q66 65 27 72 Q14 66 17.5 55 Q23 37 45 35 Q76 34 85.5 9.5Z" fill="#fff" />
      <circle cx="21.5" cy="79" r="4.3" fill="#fff" />
    </Svg>
  );
}

function TextEdit() {
  return (
    <Svg>
      <defs><Grad id="teA" h stops={['#5d7890', '#dfe8ef', '#5c768d']} /></defs>
      <g transform="rotate(-8.6 49 47.5)">
        <rect x="19" y="10" width="60.5" height="75" fill="#fcfcfc" stroke="#d6d6d6" strokeWidth="0.6" />
        <path d="M26 10 V85" stroke="#f0b0ae" />
        <Lines from={18} to={80} n={13} x1={19.5} x2={79} color="#b9bfc6" />
      </g>
      <g transform="rotate(15 69 48)">
        <rect x="66" y="6" width="6.5" height="66" rx="2" fill="url(#teA)" /><path d="M66 72 H72.5 L69.3 86Z" fill="#5c6c79" />
        <path d="M73.5 10 V32" stroke="#4a6076" strokeWidth="1.5" /><rect x="67.5" y="0" width="3.5" height="7" fill="#8ba0b2" />
      </g>
    </Svg>
  );
}

function Trash() {
  return (
    <Svg>
      <defs><Grad id="trA" h stops={['#cfd6db', '#ececec', '#dfe0e0', '#f2f2f2', '#bfc9d0']} /></defs>
      <path d="M17 18 L23 80 Q25 88 48 88 Q71 88 73 80 L79.5 18Z" fill="url(#trA)" opacity="0.95" />
      <ellipse cx="48" cy="18" rx="31.5" ry="9" fill="#aeb9c0" stroke="#e6ecef" strokeWidth="1.5" />
      <path d="M21 16 L32 8 L38 12 L46 7 L48 14 L57 6 L62 12 L72 11 L76 18 L68 26 L54 25 L44 28 L32 25 L24 23Z" fill="#eceae6" />
      <path d="M27 15 L34 12 L37 18 L29 21Z M58 12 L63 18 L58 22 L53 18Z M66 14 L72 17 L66 21Z" fill="#45494f" />
      <path d="M37 18 L46 14 L48 20 L40 23Z" fill="#35a9dc" /><path d="M48 19 L54 15 L52 25 L46 26Z" fill="#d98a3f" /><path d="M31 20 L38 23 L33 25Z" fill="#62a852" /><path d="M62 20 L68 22 L61 25Z" fill="#b3503b" />
      <path d="M45 29 Q52 36 57 27 Q57 40 42 40 Q50 37 45 29Z" fill="#fff" opacity="0.7" />
    </Svg>
  );
}

const DOCK = [
  [Finder, 1], [SiriOrb, 0], [Launchpad, 0], [Safari, 1], [Mail, 0], [Contacts, 0], [Calendar, 0], [Notes, 1], [Reminders, 0],
  [Maps, 0], [Photos, 0], [Messages, 0], [FaceTime, 0], [Pages, 0], [Numbers, 0], [Keynote, 0], [ITunes, 1], [IBooks, 0],
  [AppStore, 0], [Settings, 0], [Chrome, 1], [Atom, 1], [Line, 1], [Terminal, 1], [Spring, 1], [TextEdit, 1],
];

function DockSlot({ Icon, running }) {
  return (
    <div className="flex w-[98.6px] shrink-0 flex-col items-center pt-[9px]">
      <div className="h-[96px] w-[96px] drop-shadow-[0_1px_1px_rgba(0,0,0,0.35)]"><Icon /></div>
      {running ? <i className="mt-[5px] h-[8px] w-[8px] rounded-full bg-[#06224a]" /> : null}
    </div>
  );
}

function Dock() {
  return (
    <div className="relative z-[2] ml-[78px] mt-[2px] h-[122px] w-[2724px] rounded-t-[9px] bg-[radial-gradient(ellipse_500px_110px_at_82%_100%,#52b5dcee,transparent),radial-gradient(ellipse_600px_110px_at_22%_100%,#4ea2cdcc,transparent),linear-gradient(to_bottom,#4e7fa3,#4d92bf)] overflow-hidden">
      <div className="flex h-full pl-[8px]">
        {DOCK.map(([Icon, on], i) => <DockSlot key={i} Icon={Icon} running={on === 1} />)}
        <div className="ml-[22px] mt-[16px] h-[90px] w-[2px] bg-[#2e739f]" />
        <div className="ml-[20px]"><DockSlot Icon={Trash} /></div>
      </div>
    </div>
  );
}

/* Light and dark patches of the desktop picture beside the dock. */
function Wallpaper() {
  return (
    <svg className="absolute bottom-0 left-0 h-[130px] w-[2880px]" viewBox="0 0 2880 130">
      <defs>
        <Grad id="wpL" stops={['#173a52', '#1c5177', '#23638c']} />
        <Grad id="wpR" stops={['#2a7d9c', '#246f94', '#2b7c9d']} />
        <filter id="wpB"><feGaussianBlur stdDeviation="4" /></filter>
      </defs>
      <rect width="90" height="130" fill="url(#wpL)" />
      <rect x="2790" width="90" height="130" fill="url(#wpR)" />
      <g filter="url(#wpB)">
        <ellipse cx="16" cy="106" rx="26" ry="8" fill="#34759c" opacity="0.6" />
        <ellipse cx="50" cy="122" rx="30" ry="7" fill="#2d6f99" opacity="0.6" />
        <path d="M2860 22 L2852 70 L2842 74 L2850 20Z" fill="#56aacb" />
        <path d="M2804 10 L2826 6 L2816 60 L2804 70Z" fill="#1b5474" />
        <ellipse cx="2848" cy="112" rx="22" ry="13" fill="#1f5d72" />
        <path d="M2872 30 h12 v70 h-12z" fill="#1f6587" />
      </g>
    </svg>
  );
}

export default function App() {
  return (
    <div className="relative flex h-[1800px] w-[2880px] flex-col overflow-hidden bg-[#1b4a6a] font-[Inter,'Noto_Sans_CJK_JP',sans-serif]">
      <Wallpaper />
      <MenuBar />
      <div className="relative z-[1] mt-[2px] flex h-[1630px] shrink-0 items-start overflow-hidden rounded-b-[10px] bg-[linear-gradient(to_top,#11161a_24px,transparent_24px)]">
        <Browser />
        <EditorWindow />
      </div>
      <Dock />
    </div>
  );
}
